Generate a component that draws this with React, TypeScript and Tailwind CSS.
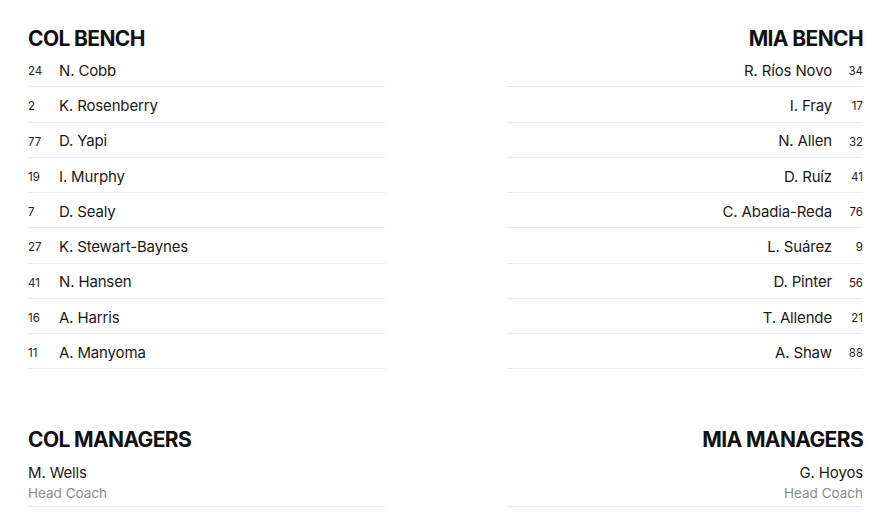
const colBench = [
  { num: "24", name: "N. Cobb" },
  { num: "2", name: "K. Rosenberry" },
  { num: "77", name: "D. Yapi" },
  { num: "19", name: "I. Murphy" },
  { num: "7", name: "D. Sealy" },
  { num: "27", name: "K. Stewart-Baynes" },
  { num: "41", name: "N. Hansen" },
  { num: "16", name: "A. Harris" },
  { num: "11", name: "A. Manyoma" },
];

const miaBench = [
  { num: "34", name: "R. Ríos Novo" },
  { num: "17", name: "I. Fray" },
  { num: "32", name: "N. Allen" },
  { num: "41", name: "D. Ruíz" },
  { num: "76", name: "C. Abadia-Reda" },
  { num: "9", name: "L. Suárez" },
  { num: "56", name: "D. Pinter" },
  { num: "21", name: "T. Allende" },
  { num: "88", name: "A. Shaw" },
];

function Heading({ children, right }: { children: string; right?: boolean }) {
  return (
    <h2
      className={`text-[21px] font-bold leading-[25px] tracking-[-0.03em] text-[#111] ${right ? "text-right" : ""}`}
    >
      {children}
    </h2>
  );
}

function BenchList({ players, right }: { players: { num: string; name: string }[]; right?: boolean }) {
  return (
    <ul className="mt-px">
      {players.map((p) => (
        <li
          key={p.num + p.name}
          className={`flex h-[35.25px] items-center border-b border-[#ebebeb] pt-[4px] ${right ? "flex-row-reverse" : ""}`}
        >
          <span
            className={`w-[31px] shrink-0 pt-px text-[11.5px] text-[#222] ${right ? "pl-[11px] text-right" : ""}`}
          >
            {p.num}
          </span>
          <span className="text-[15px] tracking-[-0.01em] text-[#1a1a1a]">{p.name}</span>
        </li>
      ))}
    </ul>
  );
}

function Manager({ name, right }: { name: string; right?: boolean }) {
  return (
    <div className={`mt-[11px] border-b border-[#ebebeb] pb-[4px] ${right ? "text-right" : ""}`}>
      <div className="text-[15px] leading-[20px] tracking-[-0.01em] text-[#1a1a1a]">{name}</div>
      <div className="mt-px text-[13.5px] leading-[18px] text-[#8c8c8c]">Head Coach</div>
    </div>
  );
}

export default function App() {
  return (
    <div className="h-[512px] w-[894px] overflow-hidden bg-white pl-[28px] pr-[31px] pt-[26px] font-['Inter',sans-serif]">
      <div className="grid grid-cols-2 gap-x-[122px]">
        <section>
          <Heading>COL BENCH</Heading>
          <BenchList players={colBench} />
        </section>
        <section>
          <Heading right>MIA BENCH</Heading>
          <BenchList players={miaBench} right />
        </section>
      </div>
      <div className="mt-[58px] grid grid-cols-2 gap-x-[122px]">
        <section>
          <Heading>COL MANAGERS</Heading>
          <Manager name="M. Wells" />
        </section>
        <section>
          <Heading right>MIA MANAGERS</Heading>
          <Manager name="G. Hoyos" right />
        </section>
      </div>
    </div>
  );
}
